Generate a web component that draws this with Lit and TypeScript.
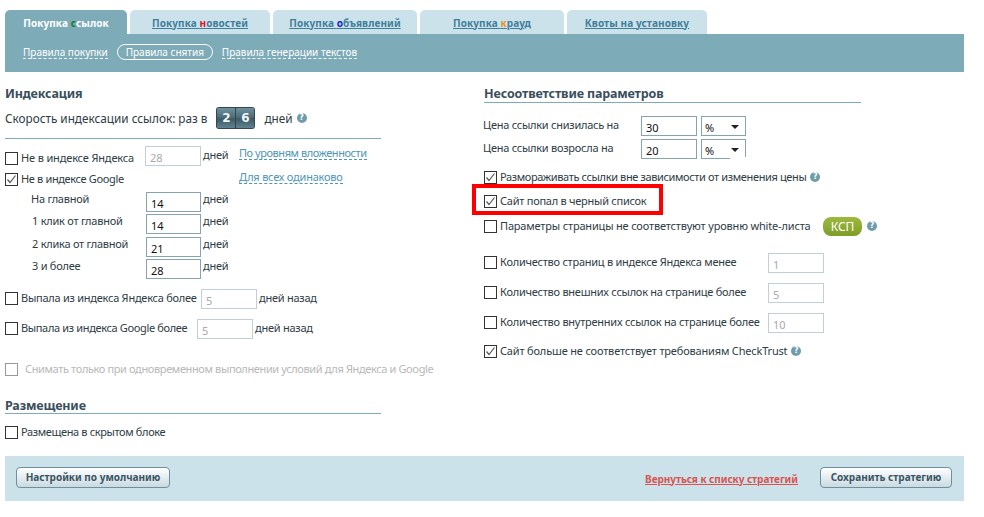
import { LitElement, html, css, svg, nothing } from "lit";
import { customElement } from "lit/decorators.js";

const check = svg`<svg class="tick" viewBox="0 0 13 13" width="13" height="13"><path d="M2.5 6.5 L5 9.5 L10.5 2.5" fill="none" stroke="#555" stroke-width="1.2"/></svg>`;

@customElement("app-root")
export class AppRoot extends LitElement {
  static styles = css`
    :host { display: block; width: 984px; height: 517px; background: #fff; overflow: hidden;
      font-family: "Noto Sans", "DejaVu Sans", sans-serif; font-size: 11px; letter-spacing: -0.25px; color: #2e3c44; }
    * { box-sizing: border-box; }
    .tabs { display: flex; gap: 3px; padding: 10px 0 0 5px; height: 34px; }
    .tab { height: 24px; padding-top: 1px; border-radius: 5px 5px 0 0; background: #cce2ea; display: flex; align-items: center; justify-content: center;
      font: bold 10px "Noto Sans", sans-serif; letter-spacing: 0.1px; color: #3f7f9c; text-decoration: underline; }
    .tab.t1 { width: 122px; background: #7eabb8; color: #fff; text-decoration: none; }
    .tab.t2 { width: 140px; } .tab.t3 { width: 144px; } .tab.t4 { width: 144px; } .tab.t5 { width: 140px; }
    .g { color: #1c7a1c; } .r { color: #e0102a; } .b { color: #1226d8; } .o { color: #e8941a; }
    .sub { margin-left: 5px; width: 959px; height: 38px; background: #7eabb8; display: flex; align-items: center; padding: 0 0 2px 18px; color: #fff; font-size: 10px; letter-spacing: 0; }
    .sub span { border-bottom: 1px dashed #fff; line-height: 12px; }
    .sub .s1 { margin-right: 9px; }
    .sub .pill { border: 1px solid #fff; border-radius: 8px; height: 16px; width: 96px; display: flex; align-items: center; justify-content: center; margin-right: 9px; line-height: 14px; }
    .main { display: flex; height: 384px; padding-top: 12px; }
    .col { display: grid; }
    .left { margin-left: 5px; grid-template-columns: 376px; grid-template-rows: 18px 32px 12px 24px 18px 22px 22px 24px 20px 44px 16px 66px 12px 36px; }
    .right { margin-left: 103px; grid-template-columns: 377px; grid-template-rows: 19px 33px 24px 34px 14px 36px 36px 24px 36px 22px; }
    .row { display: flex; align-items: center; white-space: nowrap; position: relative; }
    .row > span.t { padding-bottom: 2px; }
    .rule { border-bottom: 1px solid #7eabb8; height: 5px; }
    h2 { margin: 0; padding-top: 2px; font: bold 12.5px/16px "Noto Sans", sans-serif; letter-spacing: -0.15px; color: #3a4f5c; border-bottom: 1px solid #7eabb8; }
    h2.place { align-self: end; padding-top: 0; line-height: 14px; }
    h2.bare { border: 0; }
    .cb { flex: none; width: 13px; height: 13px; border: 1px solid #333; background: #fff; margin-right: 3px; display: block; }
    .cb.off { border-color: #999; }
    .tick { display: block; margin: -1px; }
    input { font: 11px "Noto Sans", sans-serif; width: 56px; height: 20px; border: 1.5px solid #87a3ae; padding: 3px 0 0 4px; background: #fff; color: #111; outline: 0; border-radius: 0; flex: none; }
    input.dis { border-color: #bfd0d8; color: #aaa; }
    input.w55 { width: 55px; }
    .day { margin-left: 2px; }
    .up3 { margin-bottom: 6px; } .up2 { margin-bottom: 4px; } .up5 { margin-bottom: 10px; }
    .dn3 { margin-top: 6px; } .dn1 { margin-top: 2px; }
    .ind { width: 141px; padding-left: 26px; flex: none; }
    .ind.i1 { padding-left: 27px; }
    .speed { font-size: 11.75px; letter-spacing: 0; }
    .counter { display: flex; gap: 1px; margin: 0 9px; width: 39px; height: 22px; padding: 1px; border-radius: 3px; background: #34474f; }
    .counter b { flex: 1; border-radius: 1px; background: linear-gradient(#6f909c 0%, #4d6d79 46%, #3d5a66 54%, #5f8290 100%); color: #f2f6f7; font: bold 12px/20px "DejaVu Sans", sans-serif; text-align: center; }
    .help { flex: none; width: 10px; height: 10px; border-radius: 50%; background: #6f9cab; color: #fff; font: bold 8px/10px "DejaVu Sans", sans-serif; letter-spacing: 0; text-align: center; margin-left: 4px; display: block; }
    .help.h5 { margin-left: 5px; }
    .link { color: #4f96b4; border-bottom: 1px dashed #4f96b4; line-height: 13px; letter-spacing: -0.45px; }
    .link.l2 { letter-spacing: -0.22px; }
    .yl { width: 124px; flex: none; letter-spacing: -0.15px; } .gl { width: 218px; flex: none; letter-spacing: -0.35px; }
    .dw { width: 36px; flex: none; }
    .u1 { width: 180px; flex: none; } .u2 { width: 176px; flex: none; letter-spacing: -0.35px; }
    .gray { color: #b8b8b8; margin-left: 4px; letter-spacing: -0.37px; }
    .tight { letter-spacing: -0.37px; }
    .loose { letter-spacing: -0.17px; }
    .plab { width: 158px; flex: none; margin-left: -1px; }
    .sel { width: 45px; height: 20px; border: 1.5px solid #87a3ae; margin-left: 4px; display: flex; align-items: center; justify-content: space-between; padding: 2px 6px 0 3px; color: #111; flex: none; }
    .sel i { width: 0; height: 0; border: 4px solid transparent; border-top: 4px solid #222; border-bottom: 0; }
    .sel.s2 { clip-path: polygon(0 0,100% 0,100% 90%,65% 90%,65% 100%,0 100%); }
    .clab { width: 268px; flex: none; }
    .wl { width: 311px; flex: none; }
    .end { align-self: end; height: 22px; }
    .hl { position: absolute; left: -12px; top: -10px; width: 191px; height: 31px; border: 4px solid #f00; pointer-events: none; }
    .ksp { flex: none; width: 39px; height: 19px; margin-left: 12px; border-radius: 8px; background: linear-gradient(#9dba3e,#7f9c28); color: #fff; font-size: 12px; letter-spacing: 0; line-height: 19px; text-align: center; }
    .foot { margin-left: 5px; width: 959px; height: 45px; background: #cce2ea; display: flex; align-items: center; padding: 0 12px 3px 11px; }
    .btn { height: 21px; border: 1px solid #6e8f9c; border-radius: 4px; background: linear-gradient(#fff,#c9dae1); color: #3a5564; font: bold 10px/19px "Noto Sans", sans-serif; letter-spacing: 0; text-align: center; }
    .btn.a { width: 154px; } .btn.c { width: 132px; }
    .back { margin-left: auto; margin-right: 22px; margin-top: 3px; font: bold 10px "Noto Sans", sans-serif; letter-spacing: -0.05px; color: #d9534f; text-decoration: underline; }
  `;

  private cb(on = false, off = false) {
    return html`<span class="cb ${off ? "off" : ""}">${on ? check : nothing}</span>`;
  }

  private nested(label: string, v: string, cls = "") {
    return html`<div class="row"><span class="t ind ${cls}">${label}</span><input class="w55 dn3" .value=${v} /><span class="t day">дней</span></div>`;
  }

  private count(label: string, v: string) {
    return html`<div class="row">${this.cb()}<span class="t clab">${label}</span><input class="dis dn1" .value=${v} /></div>`;
  }

  render() {
    return html`
      <div class="tabs">
        <div class="tab t1"><span>Покупка <span class="g">с</span>сылок</span></div>
        <div class="tab t2"><span>Покупка <span class="r">н</span>овостей</span></div>
        <div class="tab t3"><span>Покупка <span class="b">о</span>бъявлений</span></div>
        <div class="tab t4"><span>Покупка <span class="o">к</span>рауд</span></div>
        <div class="tab t5"><span>Квоты на установку</span></div>
      </div>
      <div class="sub">
        <span class="s1">Правила покупки</span>
        <span class="pill">Правила снятия</span>
        <span>Правила генерации текстов</span>
      </div>
      <div class="main">
        <div class="col left">
          <h2 class="bare">Индексация</h2>
          <div class="row speed">Скорость индексации ссылок: раз в
            <span class="counter"><b>2</b><b>6</b></span>дней<span class="help">?</span></div>
          <div class="rule"></div>
          <div class="row">${this.cb()}<span class="t yl">Не в индексе Яндекса</span>
            <input class="dis up2" .value=${"28"} />
            <span class="t day dw up3">дней</span>
            <span class="link up5">По уровням вложенности</span></div>
          <div class="row">${this.cb(true)}<span class="t gl">Не в индексе Google</span>
            <span class="link l2 up2">Для всех одинаково</span></div>
          ${this.nested("На главной", "14")}
          ${this.nested("1 клик от главной", "14", "i1")}
          ${this.nested("2 клика от главной", "21", "i1")}
          ${this.nested("3 и более", "28", "i1")}
          <div class="row">${this.cb()}<span class="t u1">Выпала из индекса Яндекса более</span><input class="dis dn1" .value=${"5"} /><span class="t day">дней назад</span></div>
          <div class="row">${this.cb()}<span class="t u2">Выпала из индекса Google более</span><input class="dis dn1" .value=${"5"} /><span class="t day">дней назад</span></div>
          <div class="row">${this.cb(false, true)}<span class="t gray">Снимать только при одновременном выполнении условий для Яндекса и Google</span></div>
          <h2 class="place">Размещение</h2>
          <div class="row">${this.cb()}<span class="t tight">Размещена в скрытом блоке</span></div>
        </div>
        <div class="col right">
          <h2>Несоответствие параметров</h2>
          <div class="row end"><span class="t plab">Цена ссылки снизилась на</span><input class="dn1" .value=${"30"} /><span class="sel dn1">%<i></i></span></div>
          <div class="row"><span class="t plab">Цена ссылки возросла на</span><input class="dn1" .value=${"20"} /><span class="sel s2 dn1">%<i></i></span></div>
          <div class="row">${this.cb(true)}<span class="t tight">Размораживать ссылки вне зависимости от изменения цены</span><span class="help">?</span></div>
          <div class="row">${this.cb(true)}<span class="t">Сайт попал в черный список</span><span class="hl"></span></div>
          <div class="row">${this.cb()}<span class="t wl loose">Параметры страницы не соответствуют уровню white-листа</span><span class="ksp">КСП</span><span class="help h5">?</span></div>
          ${this.count("Количество страниц в индексе Яндекса менее", "1")}
          ${this.count("Количество внешних ссылок на странице более", "5")}
          ${this.count("Количество внутренних ссылок на странице более", "10")}
          <div class="row">${this.cb(true)}<span class="t loose">Сайт больше не соответствует требованиям CheckTrust</span><span class="help">?</span></div>
        </div>
      </div>
      <div class="foot">
        <div class="btn a">Настройки по умолчанию</div>
        <span class="back">Вернуться к списку стратегий</span>
        <div class="btn c">Сохранить стратегию</div>
      </div>
    `;
  }
}
